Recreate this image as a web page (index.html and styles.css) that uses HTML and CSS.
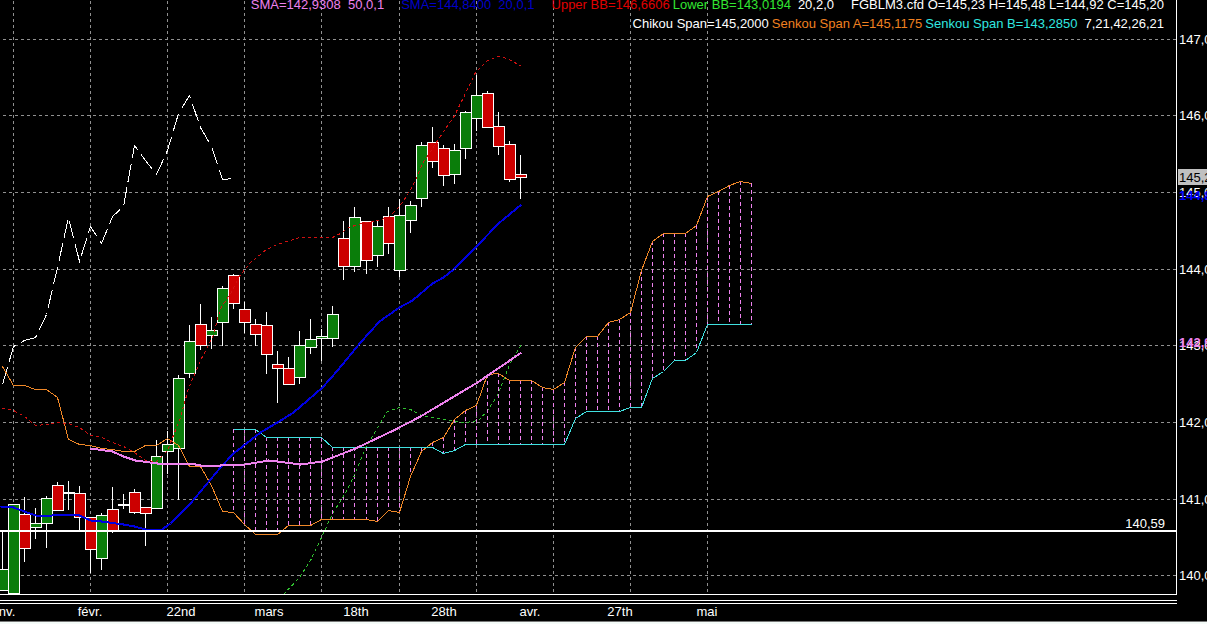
FILE: index.html
```html
<!DOCTYPE html>
<html lang="fr">
<head>
  <meta charset="UTF-8">
  <title>FGBLM3.cfd</title>
  <link rel="stylesheet" href="styles.css">
</head>
<body>
  <main class="graphique">
    <div class="zone">
      <svg id="trace" class="trace"></svg>

      <div class="legende">
        <div class="ligne">
          <span class="sma50">SMA=142,9308  50,0,1</span>
          <span class="sma20">SMA=144,8400  20,0,1</span>
          <div class="bandes">
            <span class="haute">Upper BB=146,6606</span>
            <span class="basse">Lower BB=143,0194</span>
            <span class="params">20,2,0</span>
          </div>
          <span>FGBLM3.cfd O=145,23 H=145,48 L=144,92 C=145,20</span>
        </div>
        <div class="ligne ichimoku">
          <span>Chikou Span=145,2000</span>
          <span class="spanA">Senkou Span A=145,1175</span>
          <span class="spanB">Senkou Span B=143,2850</span>
          <span class="params">7,21,42,26,21</span>
        </div>
      </div>

      <div class="niveau">140,59</div>
    </div>

    <svg id="prix" class="prix"></svg>
    <div class="separateur"></div>
    <svg id="dates" class="dates"></svg>
  </main>

  <script src="script.js"></script>
</body>
</html>
```
FILE: styles.css
```css
html, body {
  margin: 0;
  padding: 0;
  background: #f4fbf8;
}

body {
  font-family: "Liberation Sans", Arial, sans-serif;
  font-size: 13px;
  color: white;
}

.graphique {
  display: grid;
  grid-template-columns: 1fr 30px;
  background: black;
  border-bottom: 1px solid #777;
  overflow: hidden;
}

.zone {
  position: relative;
  height: 594px;
  border-right: 1px solid white;
  border-bottom: 1px solid white;
  overflow: hidden;
}

.trace {
  display: block;
  width: 100%;
  height: 100%;
  shape-rendering: crispEdges;
  fill: none;
}

/* legende au-dessus du graphique */
.legende {
  position: absolute;
  top: -5px;
  right: 12px;
  line-height: 19px;
}

.legende span { white-space: pre; }

.ligne {
  display: flex;
  justify-content: flex-end;
  gap: 17px;
}

.ichimoku,
.bandes {
  display: flex;
  gap: 3px;
}

.params { padding-left: 4px; }

.sma50 { color: #ee82ee; }
.sma20 { color: #0000c8; }
.haute { color: #e00000; }
.basse { color: #32e632; }
.spanA { color: #f08020; }
.spanB { color: #30e8e0; }

.niveau {
  position: absolute;
  right: 11px;
  bottom: 63px;
  line-height: 15px;
}

.prix {
  display: block;
  width: 30px;
  height: 595px;
  fill: white;
}

.prix .cadre { fill: #c0c0c0; }
.prix .dernier { fill: black; }
.prix .moy20 { fill: #0000ff; font-weight: bold; }
.prix .moy50 { fill: #ee82ee; font-weight: bold; }

.separateur {
  height: 2px;
  margin-top: 5px;
  border-top: 1px solid white;
  border-bottom: 1px solid white;
}

.dates {
  display: block;
  grid-column: 1 / 3;
  width: 100%;
  height: 17px;
  fill: white;
  text-anchor: middle;
}

/* courbes */
.grille { stroke: #909090; stroke-dasharray: 3 3; }
.nuage { stroke: #ee82ee; stroke-dasharray: 4 3; }
.support { stroke: white; stroke-width: 2; }
.meche { stroke: white; }
.hausse { fill: #0a7d0a; stroke: white; }
.baisse { fill: #cc0000; stroke: white; }
.chikou { stroke: white; stroke-dasharray: 18 6; }
.senkouA { stroke: #f08828; }
.senkouB { stroke: #40e0e0; }
.bbHaute { stroke: #d01010; stroke-dasharray: 3 3; }
.bbBasse { stroke: #30c030; stroke-dasharray: 3 3; }
.ligne20 { stroke: #0000e0; stroke-width: 2; }
.ligne50 { stroke: #ee82ee; stroke-width: 2; }
```
FILE: script.js
```js
const NS = "http://www.w3.org/2000/svg";
const trace = document.getElementById("trace");
const prix = document.getElementById("prix");
const dates = document.getElementById("dates");

// haut, haut du corps, bas du corps, bas, sens
const bougies = [
  [532, 569, 590, 590, 1], [504, 504, 593, 593, 1], [497, 514, 548, 562, 0],
  [508, 523, 527, 539, 1], [496, 498, 523, 548, 1], [482, 485, 510, 510, 0],
  [481, 492, 493, 510, 1], [486, 493, 517, 531, 0], [517, 517, 549, 573, 0],
  [513, 515, 558, 570, 1], [487, 509, 531, 533, 0], [494, 504, 505, 509, 1],
  [489, 492, 512, 514, 0], [507, 507, 513, 546, 0], [440, 456, 508, 508, 1],
  [431, 444, 451, 474, 1], [375, 378, 448, 500, 1], [325, 341, 373, 378, 1],
  [304, 324, 345, 350, 0], [317, 330, 335, 349, 1], [286, 288, 322, 346, 1],
  [274, 275, 303, 309, 0], [302, 309, 322, 333, 0], [319, 324, 334, 346, 0],
  [312, 325, 354, 374, 0], [351, 364, 368, 403, 0], [357, 368, 384, 384, 0],
  [331, 345, 377, 384, 1], [319, 339, 347, 354, 1], [329, 336, 338, 361, 1],
  [306, 314, 338, 347, 1], [221, 238, 266, 280, 0], [207, 217, 266, 272, 1],
  [221, 221, 260, 274, 0], [220, 226, 255, 267, 1], [207, 216, 243, 254, 0],
  [199, 215, 270, 277, 1], [201, 205, 220, 233, 1], [142, 145, 198, 207, 1],
  [127, 142, 161, 168, 0], [145, 148, 175, 186, 0], [144, 150, 174, 184, 1],
  [111, 112, 148, 159, 1], [75, 95, 118, 131, 1], [91, 93, 127, 127, 0],
  [112, 126, 146, 155, 0], [141, 144, 179, 182, 0], [155, 174, 177, 199, 0]
];

const chikou = [384, 346, 340, 337, 314, 267, 217, 261, 226, 243, 216, 206,
  145, 160, 174, 150, 113, 95, 127, 146, 179, 178];

const senkouA = [366, 385, 385, 389, 389, 397, 439, 444, 445, 448, 449, 451,
  451, 445, 445, 438, 445, 466, 466, 485, 511, 512, 524, 534, 534, 534, 525,
  525, 525, 519, 519, 519, 519, 519, 521, 510, 512, 476, 451, 442, 437, 419,
  410, 405, 374, 373, 380, 380, 380, 387, 389, 382, 347, 336, 336, 322, 319,
  312, 270, 241, 233, 233, 233, 225, 196, 191, 185, 181, 183];

// commence a la bougie 21
const senkouB = [429, 429, 429, 437, 437, 437, 437, 437, 437, 447, 447, 447,
  447, 447, 447, 447, 447, 447, 447, 453, 450, 444, 444, 444, 444, 444, 444,
  444, 444, 444, 444, 418, 411, 411, 411, 411, 407, 407, 378, 371, 360, 360,
  352, 324, 324, 324, 324, 324];

const bbHaute = "2,408 13,410 24,416 35,425 46,424 57,422 68,423 79,427 90,435 101,437 112,442 123,446 134,452 145,460 156,461 167,450 180,417 188,388 200,360 212,337 220,308 232,290 238,277 250,262 266,249 277,244 299,237 332,237 340,233 348,227 365,222 377,220 388,217 399,206 408,193 415,180 422,163 432,148 445,128 453,117 463,97 475,72 487,60 497,56 507,58 521,66";
const bbBasse = "283,594 299,577 310,560 321,537 332,513 343,496 354,475 365,447 376,429 387,411 399,407 410,409 421,415 432,417 454,421 465,422 478,420 487,410 497,395 503,380 510,362 521,344";
const sma20 = "0,506 13,507 24,511 35,515 46,516 57,514 68,514 79,515 90,520 101,521 123,524 134,526 145,529 160,530 170,523 190,503 220,467 233,453 260,432 277,422 293,412 307,400 322,387 337,370 360,342 379,321 399,307 412,300 432,283 443,277 453,269 477,245 498,223 521,204";
const sma50 = "90,448 112,451 123,456 135,460 157,463 190,463 200,465 220,465 245,464 268,460 300,464 322,461 355,448 393,430 420,416 477,382 521,352";

function x(i) {
  return Math.round(13 + (i - 1) * 11.016);
}

function ajoute(parent, nom, attributs, texte) {
  const el = document.createElementNS(NS, nom);
  for (const cle in attributs) el.setAttribute(cle, attributs[cle]);
  if (texte) el.textContent = texte;
  parent.appendChild(el);
}

function ligne(x1, y1, x2, y2, classe) {
  ajoute(trace, "line", { x1, y1, x2, y2, class: classe });
}

function courbe(points, classe) {
  ajoute(trace, "polyline", { points, class: classe, transform: "translate(0.5 0.5)" });
}

function serie(valeurs, debut) {
  return valeurs.map((y, i) => x(i + debut) + "," + y).join(" ");
}

// grille
const niveaux = [39, 115, 192, 269, 345, 422, 499, 575];
niveaux.forEach(y => ligne(3, y + 0.5, "100%", y + 0.5, "grille"));
for (let i = 1; i <= 64; i += 7) {
  ligne(x(i) + 0.5, 1, x(i) + 0.5, 594, "grille");
}

// nuage
senkouB.forEach((y, i) => {
  const px = x(i + 21) + 0.5;
  const a = senkouA[i + 21];
  ligne(px, Math.min(a, y), px, Math.max(a, y), "nuage");
});

// bougies
bougies.forEach(([haut, corpsHaut, corpsBas, bas, sens], i) => {
  const px = x(i);
  ligne(px + 0.5, haut, px + 0.5, bas, "meche");
  ajoute(trace, "rect", {
    x: px - 4.5, y: corpsHaut + 0.5, width: 11, height: corpsBas - corpsHaut,
    class: sens ? "hausse" : "baisse"
  });
});

courbe(serie(chikou, 0), "chikou");
courbe(serie(senkouA, 0), "senkouA");
courbe(serie(senkouB, 21), "senkouB");
courbe(bbHaute, "bbHaute");
courbe(bbBasse, "bbBasse");
courbe(sma20, "ligne20");
courbe(sma50, "ligne50");
ligne(0, 531, "100%", 531, "support");

// echelle des prix
niveaux.forEach((y, i) => {
  ajoute(prix, "text", { x: 2, y: y + 5 }, (147 - i) + ",00");
});
ajoute(prix, "text", { x: 2, y: 200, class: "moy20" }, "144,84");
ajoute(prix, "rect", { x: 1, y: 169, width: 29, height: 16, class: "cadre" });
ajoute(prix, "text", { x: 2, y: 182, class: "dernier" }, "145,20");
ajoute(prix, "text", { x: 2, y: 347, class: "moy50" }, "142,93");

// echelle des dates
const reperes = [[2, "janv."], [90, "févr."], [181, "22nd"], [269, "mars"],
  [356, "18th"], [444, "28th"], [530, "avr."], [620, "27th"], [707, "mai"]];
reperes.forEach(([px, nom]) => ajoute(dates, "text", { x: px, y: 12 }, nom));
```
